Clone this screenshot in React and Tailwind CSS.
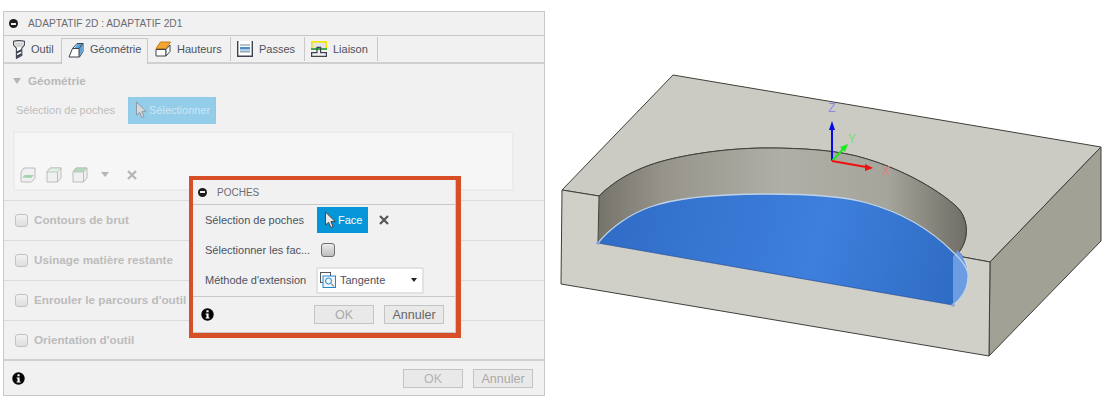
const MinusDot = () => (
  <span className="flex h-[9px] w-[9px] shrink-0 items-center justify-center rounded-full bg-[#1c1c1c]">
    <span className="h-[2px] w-[5px] bg-[#f1f1f1]" />
  </span>
);

const InfoDot = () => (
  <svg width="13" height="13" viewBox="0 0 13 13">
    <circle cx="6.5" cy="6.5" r="6.2" fill="#050505" />
    <rect x="5.4" y="2.3" width="2.2" height="2" fill="#fff" />
    <path d="M4.6 5.4H7.6V9.4H8.6V10.6H4.6V9.4H5.5V6.6H4.6Z" fill="#fff" />
  </svg>
);

const Cross = ({ color, size = 10 }) => (
  <svg width={size} height={size} viewBox="0 0 10 10">
    <path d="M1 1L9 9M9 1L1 9" stroke={color} strokeWidth="2.2" />
  </svg>
);

const Arrow = ({ fill = '#fff', stroke = '#555' }) => (
  <svg width="13" height="18" viewBox="0 0 13 18">
    <path d="M1.5 1V14L4.6 11.4L6.8 16.5L9 15.5L6.9 10.6H11.2Z" fill={fill} stroke={stroke} strokeWidth="1" />
  </svg>
);

const ToolIcon = () => (
  <svg width="12" height="19" viewBox="0 0 12 19">
    <path d="M0.6 1.2C3 0.4 9 0.4 11.4 1.2V5L8.8 8.2V15.5L3.4 18.4V8.2L0.6 5Z" fill="#fff" stroke="#3d4450" strokeWidth="1.1" />
    <path d="M1.5 2.5H10.5V4.6L8 7.2H4L1.5 4.6Z" fill="#d2d2d2" />
    <path d="M3.6 11.5L8.6 9V11.2L3.6 13.8ZM3.6 15.5L8.6 13V15.2L3.6 18Z" fill="#3d4450" />
  </svg>
);

const GeoIcon = () => (
  <svg width="16" height="16" viewBox="0 0 16 16">
    <path d="M1 15L4.5 6.5L9 1.5H15V9.5L11.5 15Z" fill="#fff" stroke="#3d4450" strokeWidth="1" strokeLinejoin="round" />
    <path d="M6 6.5L9.5 2H14.5V9.5L11 14.5V6.5Z" fill="#5aa5de" />
    <path d="M4.5 6.5H11V15M11 6.5L15 1.5" fill="none" stroke="#3d4450" strokeWidth="1" />
  </svg>
);

const HeightIcon = () => (
  <svg width="16" height="16" viewBox="0 0 16 16">
    <path d="M1 8.5H11V15H1Z" fill="#fff" stroke="#3d4450" strokeWidth="1" />
    <path d="M11 8.5L15 4V10.5L11 15Z" fill="#fff" stroke="#3d4450" strokeWidth="1" />
    <path d="M1 7.5L5.5 1H15.5L11 7.5Z" fill="#f2a531" stroke="#c77f17" strokeWidth="1" />
  </svg>
);

const PassesIcon = () => (
  <svg width="16" height="16" viewBox="0 0 16 16">
    <path d="M0.7 0V15.3H15.3V0" fill="#fff" stroke="#3d4450" strokeWidth="1.4" />
    <rect x="3" y="3" width="10" height="2" fill="#b8c4d0" />
    <rect x="3" y="6" width="10" height="2.5" fill="#4f8fc8" />
    <rect x="3" y="9.5" width="10" height="2" fill="#8fa8c0" />
  </svg>
);

const LinkIcon = () => (
  <svg width="16" height="16" viewBox="0 0 16 16">
    <rect x="0.8" y="0.8" width="14.4" height="7" fill="#e4e4e4" stroke="#f2e600" strokeWidth="1.6" />
    <rect x="0" y="7" width="16" height="2" fill="#3fae49" />
    <path d="M0.6 15.4V11.6H6V6.4H9.6V11.6H15.4V15.4Z" fill="none" stroke="#3d4450" strokeWidth="1.2" />
  </svg>
);

const FaceIcon = ({ top = '#f0f0f0', slab }) => (
  <svg width="16" height="16" viewBox="0 0 16 16">
    <path d="M4 1H15V11L11.5 15H1V5Z" fill="#f0f0f0" stroke="#bcbcbc" strokeWidth="1" strokeLinejoin="round" />
    {slab ? (
      <path d="M2 10.5L5 8H14L11 11Z" fill="#9fd4ad" />
    ) : (
      <path d="M4 1H15L11.5 5H1Z" fill={top} stroke="#bcbcbc" strokeWidth="0.8" />
    )}
    {!slab && <path d="M11.5 5V15" stroke="#bcbcbc" strokeWidth="1" />}
  </svg>
);

const Tab = ({ icon, label, active, width }) => (
  <div
    className={
      active
        ? 'relative z-10 mb-[-2px] flex h-[26px] items-center gap-[6px] border-x border-t border-[#c8c8c8] bg-[#f1f1f1] pb-[4px] pl-[6px]'
        : 'flex h-[24px] items-center gap-[6px] border-r border-[#c8c8c8] pl-[6px]'
    }
    style={{ width }}
  >
    {icon}
    <span className="text-[11px] text-[#4c5160]">{label}</span>
  </div>
);

const Row = ({ label }) => (
  <div className="flex h-[40px] items-center gap-[6px] border-t border-[#dcdcdc] pb-[1px] pl-[11px]">
    <span className="h-[13px] w-[13px] rounded-[3px] border border-[#c3c3c3] bg-gradient-to-b from-[#f2f2f2] to-[#dedede]" />
    <span className="text-[11.7px] font-bold text-[#bcbcbc]">{label}</span>
  </div>
);

const FootBtn = ({ label, color }) => (
  <button className={`h-[19px] w-[60px] border border-[#c4c4c4] bg-[#e9e9e9] text-[12.5px] ${color}`}>
    {label}
  </button>
);

const wallTop =
  'C612 183 630 172 650 165C672 157 720 148 767 148C800 148 840 150 867 159C900 169 935 187 957 207C968 218 970 238 959 252';
const floorTop =
  'C610 228 630 214 650 207C675 198 720 194 767 194C800 194 840 195 867 203C900 212 930 229 953 252';

const Scene = () => (
  <svg width="560" height="300" viewBox="550 70 560 300" className="ml-[5px] mt-[59px] shrink-0">
    <defs>
      <linearGradient id="wall" x1="598" x2="968" y1="0" y2="0" gradientUnits="userSpaceOnUse">
        <stop offset="0" stopColor="#75736a" />
        <stop offset="0.18" stopColor="#96948b" />
        <stop offset="0.5" stopColor="#b0afa7" />
        <stop offset="0.78" stopColor="#a6a59c" />
        <stop offset="1" stopColor="#6e6c64" />
      </linearGradient>
      <linearGradient id="floor" x1="600" x2="955" y1="200" y2="300" gradientUnits="userSpaceOnUse">
        <stop offset="0" stopColor="#2f6cc6" />
        <stop offset="0.6" stopColor="#3e7fdc" />
        <stop offset="1" stopColor="#2f6cc4" />
      </linearGradient>
    </defs>
    {/* top face */}
    <path
      d={`M673 75L562 190L599 196${wallTop}L963 257L990 262L1101 147Z`}
      fill="#cbcbc3"
      stroke="#3f3f3a"
      strokeWidth="1"
      strokeLinejoin="round"
    />
    {/* right side */}
    <path d="M990 262L1101 147V241L989 356Z" fill="#a2a196" stroke="#3f3f3a" strokeWidth="1" strokeLinejoin="round" />
    {/* pocket wall */}
    <path d={`M599 196${wallTop}L953 305L598 243Z`} fill="url(#wall)" />
    <path d={`M599 196${wallTop}`} fill="none" stroke="#3f3f3a" strokeWidth="1" />
    {/* pocket floor */}
    <path d={`M598 243${floorTop}V305Z`} fill="url(#floor)" />
    <path d="M953 257L958 250C965 258 969 270 968 277C968 290 960 300 953 305Z" fill="#6c9ce2" />
    {/* front face */}
    <path
      d="M562 190L599 196L598 243L953 305C960 300 968 290 968 277C969 270 966 262 963 257L990 262L989 356L561 284Z"
      fill="#d0d0c8"
    />
    <path d="M599 196L562 190L561 284L989 356L990 262L963 257M599 196L598 243" fill="none" stroke="#3f3f3a" strokeWidth="1" />
    {/* selected face highlight */}
    <path
      d={`M598 243${floorTop}C962 260 969 270 968 277C968 290 960 300 953 305`}
      fill="none"
      stroke="#bfd3e8"
      strokeWidth="1.3"
    />
    <path d="M598 243L953 305" fill="none" stroke="#27509a" strokeWidth="0.8" />
    <circle cx="598" cy="243" r="1.8" fill="#7ea8dc" />
    <circle cx="953" cy="305" r="1.8" fill="#7ea8dc" />
    {/* triad */}
    <path d="M832 161V128" stroke="#0a0ae6" strokeWidth="2" />
    <path d="M832 121L835 130H829Z" fill="#0a0ae6" />
    <path d="M832 161L844 148" stroke="#1ee81e" strokeWidth="2" />
    <path d="M848 144L845 152L840 147Z" fill="#1ee81e" />
    <path d="M832 161L866 167" stroke="#f01010" strokeWidth="2" />
    <path d="M873 168L865 171V164Z" fill="#f01010" />
    <text x="832" y="112" fontSize="12" textAnchor="middle" fill="#8a8ae6">Z</text>
    <text x="852" y="143" fontSize="12" textAnchor="middle" fill="#78e078">Y</text>
    <text x="886" y="175" fontSize="12" textAnchor="middle" fill="#e08080">X</text>
  </svg>
);

export default function App() {
  return (
    <div className="flex h-[418px] w-[1116px] items-start bg-white pl-[3px] pt-[11px] font-['Liberation_Sans',sans-serif]">
      <div className="relative flex h-[385px] w-[542px] shrink-0 flex-col border border-[#c8c8c8] bg-[#f1f1f1] text-[#4c5160]">
        {/* title */}
        <div className="flex h-[24px] shrink-0 items-center gap-[10px] border-b border-[#c8c8c8] pl-[5px]">
          <MinusDot />
          <span className="text-[10.2px] text-[#6b6b70]">ADAPTATIF 2D : ADAPTATIF 2D1</span>
        </div>

        {/* tabs */}
        <div className="flex h-[28px] shrink-0 items-end border-b-2 border-[#d0d0d0] pl-[5px]">
          <div className="mb-[1px] flex h-[24px] w-[52px] items-center gap-[6px] pl-[4px]">
            <ToolIcon />
            <span className="text-[11px]">Outil</span>
          </div>
          <Tab active width="87px" icon={<GeoIcon />} label="Géométrie" />
          <div className="mb-[1px] flex pl-[1px]">
            <Tab width="82px" icon={<HeightIcon />} label="Hauteurs" />
            <Tab width="74px" icon={<PassesIcon />} label="Passes" />
            <Tab width="73px" icon={<LinkIcon />} label="Liaison" />
          </div>
        </div>

        {/* geometry section */}
        <div className="flex h-[136px] shrink-0 flex-col px-[9px]">
          <div className="mt-[8px] flex items-center gap-[7px]">
            <span className="h-0 w-0 border-x-[4px] border-t-[6px] border-x-transparent border-t-[#b5b5b5]" />
            <span className="text-[11.7px] font-bold text-[#b9b9b9]">Géométrie</span>
          </div>
          <div className="mt-[7px] flex items-center">
            <span className="w-[115px] pl-[3px] text-[11px] text-[#bdbdbd]">Sélection de poches</span>
            <div className="flex h-[27px] w-[88px] items-center gap-[1px] border border-[#8fcbe8] bg-[#93cde9] pl-[6px]">
              <Arrow fill="#d8d8d8" stroke="#8a9aa8" />
              <span className="text-[11px] text-[#cfe6f2]">Sélectionner</span>
            </div>
          </div>
          <div className="mt-[7px] flex h-[60px] w-[501px] items-end gap-[10px] border-2 border-[#ececec] bg-[#f6f6f6] pb-[6px] pl-[5px]">
            <FaceIcon slab />
            <FaceIcon top="#dff2e3" />
            <FaceIcon top="#b4dcbc" />
            <span className="mb-[6px] ml-[3px] h-0 w-0 border-x-[4px] border-t-[5px] border-x-transparent border-t-[#b5b5b5]" />
            <span className="mb-[3px] ml-[8px]">
              <Cross color="#b5b5b5" />
            </span>
          </div>
        </div>

        <Row label="Contours de brut" />
        <Row label="Usinage matière restante" />
        <Row label="Enrouler le parcours d'outil" />
        <Row label="Orientation d'outil" />

        {/* footer */}
        <div className="-mt-px flex flex-1 items-center border-t-2 border-[#d0d0d0] pl-[8px] pr-[11px]">
          <InfoDot />
          <div className="ml-auto flex gap-[10px]">
            <FootBtn label="OK" color="text-[#b4b4b4]" />
            <FootBtn label="Annuler" color="text-[#a9a9a9]" />
          </div>
        </div>

        {/* poches dialog */}
        <div className="absolute left-[185px] top-[164px] h-[162px] w-[272px] border-4 border-b-[5px] border-r-[5px] border-[#d84e26] bg-[#f1f1f1]">
          <div className="flex h-full flex-col border-b border-r border-[#c8c8c8]">
            <div className="flex h-[25px] shrink-0 items-center gap-[10px] border-b border-[#c8c8c8] pl-[5px]">
              <MinusDot />
              <span className="text-[10px] text-[#6b6b70]">POCHES</span>
            </div>
            <div className="flex h-[30px] shrink-0 items-center pl-[12px]">
              <span className="w-[112px] text-[11px]">Sélection de poches</span>
              <div className="flex h-[26px] w-[51px] items-center gap-[1px] bg-[#0696d7] pl-[7px]">
                <Arrow fill="#e8e8e8" stroke="#444" />
                <span className="text-[11px] text-white">Face</span>
              </div>
              <span className="ml-[11px]">
                <Cross color="#555" />
              </span>
            </div>
            <div className="flex h-[30px] shrink-0 items-center pl-[12px]">
              <span className="w-[116px] text-[11px]">Sélectionner les fac...</span>
              <span className="h-[14px] w-[14px] rounded-[3px] border border-[#6e6e6e] bg-gradient-to-b from-[#ececec] to-[#bdbdbd]" />
            </div>
            <div className="flex h-[32px] shrink-0 items-center border-b border-[#c8c8c8] pb-[1px] pl-[12px]">
              <span className="w-[111px] text-[11px]">Méthode d'extension</span>
              <div className="flex h-[27px] w-[108px] items-center rounded-[2px] border-2 border-[#e2e2e2] bg-white pl-[2px]">
                <svg width="16" height="16" viewBox="0 0 16 16">
                  <rect x="0.5" y="0.5" width="10" height="10" fill="none" stroke="#555" />
                  <rect x="3" y="4" width="12.5" height="11.5" fill="#eef5fb" stroke="#1f86d0" strokeWidth="1" />
                  <circle cx="8.5" cy="9" r="3" fill="none" stroke="#1f86d0" />
                  <path d="M11 11.5L14 14.5" stroke="#999" strokeWidth="1.2" />
                </svg>
                <span className="ml-[4px] text-[11px]">Tangente</span>
                <span className="ml-auto mr-[5px] h-0 w-0 border-x-[3.5px] border-t-[4px] border-x-transparent border-t-[#222]" />
              </div>
            </div>
            <div className="flex flex-1 items-center pl-[8px] pr-[11px]">
              <InfoDot />
              <div className="ml-auto flex gap-[10px]">
                <FootBtn label="OK" color="text-[#a9a9a9]" />
                <FootBtn label="Annuler" color="text-[#666]" />
              </div>
            </div>
          </div>
        </div>
      </div>
      <Scene />
    </div>
  );
}
